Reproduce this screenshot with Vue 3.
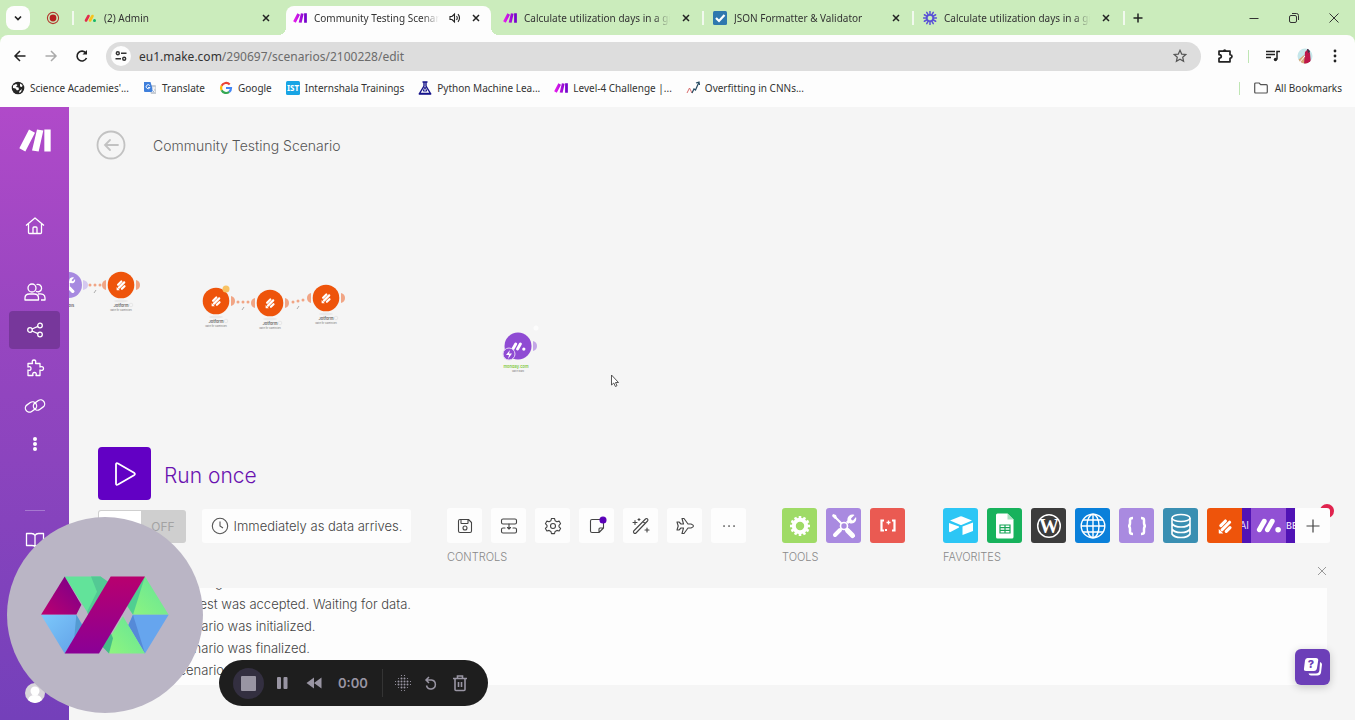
<script setup>
const tabs = [
  { title: '(2) Admin', icon: 'monday', sep: false },
  { title: 'Community Testing Scenario | Make', icon: 'make', active: true, sound: true },
  { title: 'Calculate utilization days in a given month', icon: 'make', sep: true },
  { title: 'JSON Formatter & Validator', icon: 'check', sep: true },
  { title: 'Calculate utilization days in a given month', icon: 'burst', sep: true }
]

const bookmarks = [
  { title: "Science Academies'...", icon: 'globe' },
  { title: 'Translate', icon: 'translate' },
  { title: 'Google', icon: 'google' },
  { title: 'Internshala Trainings', icon: 'ist' },
  { title: 'Python Machine Lea...', icon: 'flask' },
  { title: 'Level-4 Challenge |...', icon: 'make' },
  { title: 'Overfitting in CNNs...', icon: 'chart' }
]

const modules = [
  { x: 52, y: 178, left: true, right: true },
  { x: 147, y: 194, right: true, warn: true },
  { x: 201, y: 196, left: true, right: true },
  { x: 257, y: 191, left: true, right: true }
]

const links = [
  { x: 26, y: 178, tilt: 0 },
  { x: 174, y: 195, tilt: 0 },
  { x: 229, y: 194, tilt: -1 }
]

const controls = ['save', 'align', 'settings', 'note', 'wand', 'plane', 'more']
const controlNames = {
  save: 'Save',
  align: 'Explain flow',
  settings: 'Scenario settings',
  note: 'Notes',
  wand: 'Auto-align',
  plane: 'Flow control',
  more: 'More'
}

const log = [
  'Now running',
  'The request was accepted. Waiting for data.',
  'The scenario was initialized.',
  'The scenario was finalized.',
  'The scenario was stopped.'
]

const burst = Array.from({ length: 12 }, (_, i) => i * 30)
const gearTeeth = Array.from({ length: 12 }, (_, i) => i * 30)
const dots = [
  [3, 0], [6, 0],
  [0, 3], [3, 3], [6, 3], [9, 3],
  [0, 6], [3, 6], [6, 6], [9, 6],
  [3, 9], [6, 9]
]
const faintDots = [
  [-3, 3], [-3, 6], [12, 3], [12, 6],
  [3, -3], [6, -3], [3, 12], [6, 12],
  [0, 0], [9, 0], [0, 9], [9, 9]
]
</script>

<template>
  <div class="screen">
    <svg class="defs" aria-hidden="true">
      <defs>
        <linearGradient id="makeGrad" x1="0" x2="1">
          <stop offset="0" stop-color="#f01ff0" />
          <stop offset="1" stop-color="#6a00c8" />
        </linearGradient>
        <linearGradient id="stripe" x1="0" y1="0" x2="0" y2="1">
          <stop offset="0" stop-color="#b8006e" />
          <stop offset="1" stop-color="#8a0096" />
        </linearGradient>
        <linearGradient id="wedge" x1="1" y1="0" x2="0" y2="1">
          <stop offset="0" stop-color="#76008c" />
          <stop offset="1" stop-color="#bd006f" />
        </linearGradient>
        <linearGradient id="blueL" x1="0" y1="0" x2="1" y2="1">
          <stop offset="0" stop-color="#7cc8fb" />
          <stop offset="1" stop-color="#619fe6" />
        </linearGradient>
        <linearGradient id="greenB" x1="0" y1="1" x2="1" y2="0">
          <stop offset="0" stop-color="#8ff57e" />
          <stop offset="1" stop-color="#62e39a" />
        </linearGradient>
        <symbol id="make" viewBox="0 0 96 68">
          <path d="M30 1 48 11 19 67 1 57zM54 1 73 4 59 67 39 64zM76 1h19v66H76z" />
        </symbol>
        <symbol id="jot" viewBox="0 0 24 24">
          <path d="M7 11.500 12.500 6M8.500 16.500 17.500 7.500M13.500 18.500 18 14" fill="none" stroke="#fff" stroke-width="3.800" stroke-linecap="round" />
          <path d="M4.500 15.500v4.500q0 1 1 1H10z" fill="#fff" />
        </symbol>
        <symbol id="mon" viewBox="0 0 24 14">
          <path d="M3 11 7.500 3M10.500 11 15 3" fill="none" stroke="#fff" stroke-width="4.600" stroke-linecap="round" />
          <circle cx="20.500" cy="11" r="2.600" fill="#fff" />
        </symbol>
        <symbol id="tools" viewBox="0 0 30 30">
          <path d="M5 5 12 12M18 18 25 25" stroke="#fff" stroke-width="2" stroke-linecap="round" />
          <path d="m4 3 3 1 1 3-2 1-3-3z" fill="#fff" />
          <path d="m18.500 19.500 5 5" stroke="#fff" stroke-width="5" stroke-linecap="round" />
          <path d="M11 19 6 24" stroke="#fff" stroke-width="4" stroke-linecap="round" />
          <path d="m18 12 3-3" stroke="#fff" stroke-width="3" />
          <path d="M25.500 4 22 7.500l.5 1.500 1.500.5 3-3.500c1 3-1 6.500-4.500 6.500-3 0-4.500-2.500-4-5 .5-3 4-5 7-3.500z" fill="#fff" />
          <circle cx="15" cy="15" r="3.500" fill="none" stroke="#fff" stroke-width="1.600" />
        </symbol>
      </defs>
    </svg>

    <header class="browser">
      <div class="tabstrip">
        <button class="tab-search" aria-label="Search tabs">
          <svg width="10" height="8" viewBox="0 0 10 8"><path d="m2 2.500 3 3 3-3" fill="none" stroke="#222" stroke-width="1.700" /></svg>
        </button>
        <svg class="rec" width="14" height="14" viewBox="0 0 14 14"><circle cx="7" cy="7" r="5.600" fill="none" stroke="#b3382f" stroke-width="1.100" /><circle cx="7" cy="7" r="3.400" fill="#b51f1f" /></svg>
        <span class="sep first"></span>
        <div v-for="(tab, i) in tabs" :key="i" class="tab" :class="{ active: tab.active, divided: tab.sep }">
          <svg v-if="tab.icon === 'monday'" class="fav" width="14" height="14" viewBox="0 0 14 14" fill="none" stroke-width="2.600" stroke-linecap="round">
            <path d="m3 9.500 2.500-4.500" stroke="#e22b4b" /><path d="m7 9.500 2.500-4.500" stroke="#f7c31d" /><circle cx="11.500" cy="9.500" r="1.500" fill="#14b866" />
          </svg>
          <svg v-else-if="tab.icon === 'make'" class="fav" width="14" height="14" viewBox="0 0 14 14"><use href="#make" y="2" width="14" height="10" fill="url(#makeGrad)" /></svg>
          <svg v-else-if="tab.icon === 'check'" class="fav" width="14" height="14" viewBox="0 0 14 14"><rect width="14" height="14" rx="1.500" fill="#2f78ae" /><path d="m3 7 3 3 5.500-6" fill="none" stroke="#fff" stroke-width="2.200" /></svg>
          <svg v-else class="fav" width="14" height="14" viewBox="-7 -7 14 14"><circle r="3.200" fill="none" stroke="#5a52d6" stroke-width="1.800" /><path v-for="a in burst" :key="a" d="M0-3.500V-6.500" :transform="`rotate(${a})`" stroke="#5a52d6" stroke-width="1.500" stroke-linecap="round" /></svg>
          <span class="tab-title">{{ tab.title }}</span>
          <svg v-if="tab.sound" class="sound" width="12" height="12" viewBox="0 0 12 12" fill="none" stroke="#222" stroke-width="1.100"><path d="M1 4.500h2L5.500 2v8L3 7.500H1zM7.500 4q1.500 2 0 4M9 2.200q3 3.800 0 7.600" /></svg>
          <button class="tab-close" aria-label="Close tab"><svg width="12" height="12" viewBox="0 0 12 12"><path d="m3 3 6 6M9 3 3 9" stroke="#222" stroke-width="1.500" /></svg></button>
        </div>
        <span class="sep last"></span>
        <button class="new-tab" aria-label="New tab"><svg width="12" height="12" viewBox="0 0 12 12"><path d="M6 1.500v9M1.500 6h9" stroke="#222" stroke-width="1.500" /></svg></button>
        <div class="win">
          <button aria-label="Minimize"><svg width="12" height="12" viewBox="0 0 12 12"><path d="M1.500 6.500h9" stroke="#333" /></svg></button>
          <button aria-label="Restore"><svg width="12" height="12" viewBox="0 0 12 12" fill="none" stroke="#333"><rect x="1.500" y="3.500" width="7" height="7" rx="1.500" /><path d="M4 1.500h4.500q2 0 2 2V8" /></svg></button>
          <button aria-label="Close"><svg width="12" height="12" viewBox="0 0 12 12"><path d="m1.500 1.500 9 9M10.500 1.500l-9 9" stroke="#333" /></svg></button>
        </div>
      </div>

      <div class="toolbar">
        <button class="nav" aria-label="Back"><svg width="14" height="14" viewBox="0 0 14 14" fill="none" stroke="#222" stroke-width="1.500"><path d="M12.500 7H2M7 2 2 7l5 5" /></svg></button>
        <button class="nav" aria-label="Forward"><svg width="14" height="14" viewBox="0 0 14 14" fill="none" stroke="#aaa" stroke-width="1.500"><path d="M1.500 7H12M7 2l5 5-5 5" /></svg></button>
        <button class="nav" aria-label="Reload"><svg width="14" height="14" viewBox="0 0 14 14" fill="none" stroke="#222" stroke-width="1.600"><path d="M11.500 9A4.900 4.900 0 1 1 11 4.200" /><path d="M12 1v4.500H7.500z" fill="#222" stroke="none" /></svg></button>
        <div class="omnibox">
          <button class="site-info" aria-label="Site information"><svg width="12" height="12" viewBox="0 0 12 12" fill="none" stroke="#333" stroke-width="1.400"><circle cx="2.800" cy="3.200" r="1.500" /><path d="M6 3.200h5.500M.5 8.800H6" /><circle cx="9.200" cy="8.800" r="1.500" /></svg></button>
          <a class="url" href="#"><b>eu1.make.com</b>/290697/scenarios/2100228/edit</a>
          <button class="star" aria-label="Bookmark"><svg width="14" height="14" viewBox="0 0 14 14"><path d="m7 1.300 1.700 3.800 4.100.4-3.100 2.700.9 4.100L7 10.200l-3.600 2.100.9-4.100L1.200 5.500l4.100-.4z" fill="none" stroke="#555" stroke-width="1.200" /></svg></button>
        </div>
        <button class="ext" aria-label="Extensions"><svg width="16" height="16" viewBox="0 0 16 16"><path d="M2 3.200h11v3.500q2 .3 2 1.800t-2 1.800v3.500H2v-3.500q2.300-.3 2.300-1.800T2 6.700z" fill="none" stroke="#222" stroke-width="1.700" stroke-linejoin="round" /><path d="M6 3q0-1.800 1.700-1.800T9.400 3" fill="#222" /></svg></button>
        <span class="gsep"></span>
        <button class="media" aria-label="Media controls"><svg width="16" height="14" viewBox="0 0 16 14" fill="none" stroke="#222" stroke-width="1.500"><path d="M1 2.500h9M1 5.500h9M1 8.500h5M12 10.500v-8h3" /><circle cx="10.500" cy="10.500" r="1.700" fill="#222" stroke="none" /></svg></button>
        <button class="profile" aria-label="Profile"><svg width="16" height="16" viewBox="0 0 16 16"><clipPath id="pc"><circle cx="8" cy="8" r="7.500" /></clipPath><g clip-path="url(#pc)"><path d="M0 0h16v16H0z" fill="#c5e6ea" /><path d="M0 13 7 7l4 9H0z" fill="#d8a878" /><path d="m8 4 3-3 2 4 1 11H7z" fill="#bd1748" /><path d="m10 1 2-1 1 4-2 1z" fill="#453048" /><path d="m2 15 6-7" stroke="#fff" /></g></svg></button>
        <button class="kebab" aria-label="Menu"><svg width="4" height="14" viewBox="0 0 4 14" fill="#222"><circle cx="2" cy="2" r="1.400" /><circle cx="2" cy="7" r="1.400" /><circle cx="2" cy="12" r="1.400" /></svg></button>
      </div>

      <nav class="bookmarks" aria-label="Bookmarks">
        <a v-for="b in bookmarks" :key="b.title" href="#" class="bm">
          <svg v-if="b.icon === 'globe'" width="14" height="14" viewBox="0 0 14 14"><circle cx="7" cy="7" r="6.300" fill="#262626" /><path d="M2 4.500 5 3l1.500 1L5 6l2.500.5L8 8.500l-2 1-1.500-2L2 7zM9 2.500l2.500 1.500L11 6 9 5.500zM8.500 10l2.500-2-1 3-2 1z" fill="#fff" /></svg>
          <svg v-else-if="b.icon === 'translate'" width="14" height="14" viewBox="0 0 14 14"><path d="M5 4h7q1 0 1 1v8H8z" fill="#c8cdd4" /><path d="M1 1h6.500L10.500 11H2q-1 0-1-1z" fill="#3f7fdb" /><path d="M6.800 4.600A2 2 0 1 0 7 6.500H5M9 7h3.500M11 6v1q0 2-2 4M9.500 8l2.500 3" fill="none" stroke="#fff" stroke-width=".9" /></svg>
          <svg v-else-if="b.icon === 'google'" width="14" height="14" viewBox="0 0 14 14" fill="none" stroke-width="2.200"><path d="M10.700 3.400A5 5 0 0 0 2.600 4.800" stroke="#ea4335" /><path d="M2.600 4.800a5 5 0 0 0 0 4.400" stroke="#fbbc05" /><path d="M2.600 9.200a5 5 0 0 0 7.600 1.700" stroke="#34a853" /><path d="M10.200 10.900A5 5 0 0 0 12 7H7" stroke="#4285f4" /></svg>
          <svg v-else-if="b.icon === 'ist'" width="14" height="14" viewBox="0 0 14 14"><rect width="14" height="14" rx="1.500" fill="#18a4e4" /><text x="7" y="10" text-anchor="middle" font-size="8" font-weight="700" fill="#fff">IST</text></svg>
          <svg v-else-if="b.icon === 'flask'" width="14" height="14" viewBox="0 0 14 14" fill="none" stroke="#16148a" stroke-width="1.400"><path d="M4.500 1h5M6 1v4L1.500 12.500h11L8 5V1" /><path d="m7 6 1.800 4H5.200z" stroke-width="1" /><path d="M1 13h12" /></svg>
          <svg v-else-if="b.icon === 'make'" width="14" height="14" viewBox="0 0 14 14"><use href="#make" y="2" width="14" height="10" fill="url(#makeGrad)" /></svg>
          <svg v-else width="14" height="14" viewBox="0 0 14 14" fill="none"><path d="m1 12 2.500-5L6 12" stroke="#d86c6c" /><path d="M6 12 8 8l1.500 1L13 1M10 2l3-1 .5 3" stroke="#274c63" stroke-width="1.200" /></svg>
          <span>{{ b.title }}</span>
        </a>
        <span class="gsep bm-sep"></span>
        <a href="#" class="bm all">
          <svg width="14" height="12" viewBox="0 0 14 12"><path d="M.7 10V2q0-1 1-1h3.500l1.500 1.700h5.600q1 0 1 1V10q0 1-1 1H1.700q-1 0-1-1z" fill="none" stroke="#555" stroke-width="1.200" /></svg>
          <span>All Bookmarks</span>
        </a>
      </nav>
    </header>

    <div class="app">
      <aside class="sidebar">
        <a class="logo" href="#" aria-label="Make"><svg width="32" height="23" fill="#fff"><use href="#make" width="32" height="23" /></svg></a>
        <a class="item home" href="#" aria-label="Organization"><svg width="20" height="20" viewBox="0 0 20 20"><path d="M1 9.500 10 2l9 7.500M3.500 8v8.500q0 1 1 1h11q1 0 1-1V8M8 17v-5q0-1 1-1h2q1 0 1 1v5" /></svg></a>
        <a class="item" href="#" aria-label="Team"><svg width="22" height="20" viewBox="0 0 22 20"><circle cx="8" cy="6" r="4" /><path d="M12.500 2.700A3.700 3.700 0 1 1 12 9.300M1 18v-2q0-4 4.500-4h4.500q4.500 0 4.500 4v2zM14 12q7-1 7 4v2h-4" /></svg></a>
        <a class="item active" href="#" aria-label="Scenarios"><svg width="20" height="20" viewBox="0 0 20 20"><circle cx="5" cy="10" r="2.300" /><circle cx="15" cy="5.500" r="2.300" /><circle cx="15" cy="14.500" r="2.300" /><path d="m7 9 6-2.600M7 11l6 2.600" /></svg></a>
        <a class="item" href="#" aria-label="Templates"><svg width="20" height="20" viewBox="0 0 20 20"><path d="M3 5.500h4.500Q6.500 2 9 2t1.500 3.500H15V9q3.500-1 3.500 1.500T15 12v5.500h-4q1-3-1.500-3T8 17.500H3V12q3 1 3-1.500T3 9z" /></svg></a>
        <a class="item" href="#" aria-label="Connections"><svg width="22" height="20" viewBox="0 0 22 20"><rect x="1" y="7" width="12" height="8" rx="4" transform="rotate(-35 7 11)" /><rect x="9" y="5" width="12" height="8" rx="4" transform="rotate(-35 15 9)" /></svg></a>
        <a class="item" href="#" aria-label="More"><svg width="6" height="16" viewBox="0 0 6 16"><g class="solid"><circle cx="3" cy="3" r="2" /><circle cx="3" cy="8" r="2" /><circle cx="3" cy="13" r="2" /></g></svg></a>
        <div class="side-bottom">
          <span class="rule"></span>
          <a class="item" href="#" aria-label="Resources"><svg width="20" height="18" viewBox="0 0 20 18"><path d="M10 4.500Q9 2.500 6.500 2.500H1.500v12H7q2 0 3 1 1-1 3-1h5.500v-12h-5Q11 2.500 10 4.500zV15" /></svg></a>
        </div>
        <a class="avatar" href="#" aria-label="Profile"><svg width="20" height="20" viewBox="0 0 20 20"><circle cx="10" cy="10" r="10" fill="#d8d5da" /><circle cx="10" cy="8" r="4.500" fill="#fff" /><path d="M3 17q1-5 7-5t7 5q-3 3-7 3t-7-3z" fill="#fff" /></svg></a>
      </aside>

      <main class="editor">
        <svg class="canvas" width="100%" height="100%">
          <circle cx="0" cy="178" r="13" fill="#a78ae0" />
          <use href="#tools" x="-12" y="168" width="20" height="20" />
          <path d="M14 173q5 1 5 5t-5 5z" fill="#d5c8f0" />
          <text x="0" y="200" class="name">Tools</text>
          <g v-for="(l, i) in links" :key="'l' + i" :transform="`translate(${l.x} ${l.y})`">
            <circle cx="-5" :cy="-l.tilt" r="1.500" class="link" /><circle r="1.500" class="link" /><circle cx="5" :cy="l.tilt" r="1.500" class="link" />
            <path d="m-1 8 2-3" stroke="#999" stroke-width=".8" />
          </g>
          <g v-for="(m, i) in modules" :key="i" :transform="`translate(${m.x} ${m.y})`">
            <path v-if="m.left" d="M-15-5q-4 1-4 5t4 5z" fill="#f1a585" />
            <path v-if="m.right" d="M15-5q4 1 4 5t-4 5z" fill="#f1a585" />
            <circle r="13.300" fill="#ee540b" />
            <use href="#jot" x="-7" y="-7" width="14" height="14" />
            <circle v-if="m.warn" cx="10" cy="-12" r="3.500" fill="#f8c263" />
            <ellipse cy="16" rx="7" ry="1.500" fill="#e9e9e9" />
            <text y="22" class="name">Jotform</text>
            <circle cx="10" cy="20" r="1.800" fill="none" stroke="#ddd" stroke-width=".6" />
            <text y="26" class="sub">Watch for Submissions</text>
          </g>
          <g transform="translate(449 239)">
            <path d="M15-5q4 1 4 5t-4 5z" fill="#c3a6e6" />
            <circle r="13.500" fill="#8f4bd3" />
            <use href="#mon" x="-7" y="-4" width="15" height="9" />
            <circle cx="-9" cy="8" r="6" fill="#8f4bd3" stroke="#e4d5f5" stroke-width="1" />
            <path d="m-8 4-4 5h3l-1 4 4-5.500h-3z" fill="#fff" />
            <circle cx="18" cy="-18" r="2.500" fill="#fcfcfc" />
            <text x="-2" y="22" class="name green">monday.com</text>
            <text x="0" y="26" class="sub">Watch Board</text>
          </g>
        </svg>

        <div class="editor-head">
          <button class="back" aria-label="Back"><svg width="30" height="30" viewBox="0 0 30 30" fill="none" stroke="#c2c2c2" stroke-width="1.800"><circle cx="15" cy="15" r="13.500" /><path d="M22 15H9M14 10l-5 5 5 5" stroke-linecap="round" /></svg></button>
          <h1>Community Testing Scenario</h1>
        </div>

        <div class="dock">
          <div class="run">
            <button class="play" aria-labelledby="run-label"><svg width="26" height="28" viewBox="0 0 26 28"><path d="M4 4.500v19q0 2 2 1L22 15.200q1.800-1.200 0-2.400L6 3.500q-2-1-2 1z" fill="none" stroke="#fff" stroke-width="1.800" /></svg></button>
            <span id="run-label">Run once</span>
          </div>

          <div class="bar">
            <button class="toggle" role="switch" aria-checked="false"><i></i><span>OFF</span></button>
            <button class="schedule"><svg width="18" height="18" viewBox="0 0 18 18" fill="none" stroke="#555" stroke-width="1.100"><circle cx="9" cy="9" r="7.700" /><path d="M9 4.500V9l3 2" /></svg>Immediately as data arrives.</button>

            <section class="group">
              <div class="tiles">
                <button v-for="c in controls" :key="c" class="tile light" :aria-label="controlNames[c]">
                  <svg width="20" height="20" viewBox="0 0 20 20" fill="none" stroke="#444" stroke-width="1.100" stroke-linejoin="round" stroke-linecap="round">
                    <template v-if="c === 'save'"><path d="M3.500 5q0-1.500 1.500-1.500h8.500l3 3V15q0 1.500-1.500 1.500H5q-1.500 0-1.500-1.500zM6 3.500V7q0 .5.500.5h6q.5 0 .5-.5V3.500" /><circle cx="10" cy="12" r="2" /></template>
                    <template v-else-if="c === 'align'"><rect x="2.500" y="3" width="15" height="5" rx="1.500" /><path d="M6 12H4q-1.500 0-1.500 1.500v2Q2.500 17 4 17h12q1.500 0 1.500-1.500v-2Q17.500 12 16 12h-2M10 8v5M8.500 11.500 10 13l1.500-1.500" /></template>
                    <template v-else-if="c === 'settings'"><circle cx="10" cy="10" r="2.500" /><path d="M8.500 2.500h3l.6 2.200 1.800 1 2.200-.6 1.500 2.600L16 9.300v1.500l1.600 1.600-1.500 2.600-2.200-.6-1.800 1-.6 2.200h-3l-.6-2.200-1.800-1-2.200.6-1.500-2.600L4 10.800V9.300L2.400 7.700l1.500-2.600 2.200.6 1.800-1z" /></template>
                    <template v-else-if="c === 'note'"><path d="M12 16.500H5q-1.500 0-1.500-1.500V5q0-1.500 1.500-1.500h10q1.500 0 1.500 1.500v7zM12 16.500V13q0-1 1-1h3.500" /><circle cx="16" cy="4" r="3" fill="#5a00b8" stroke="#5a00b8" /></template>
                    <template v-else-if="c === 'wand'"><path d="M2.700 15 14.500 3q1-1 2 0t0 2L5 17q-1 1-2 0t-.3-2zM12 5.500l2 2M4 4.500v4M2 6.500h4M16 12v4M14 14h4M8 2.500v2M7 3.500h2" /></template>
                    <template v-else-if="c === 'plane'"><path d="M7 2.500h2l4 5.500h3q2.500 1 2.500 2t-2.500 2h-3l-4 5.500H7L8.500 12H6l-2 2H2l1.200-4L2 6h2l2 2h2.500z" /></template>
                    <template v-else><path d="M5 10h.1M10 10h.1M15 10h.1" stroke-width="1.700" /></template>
                  </svg>
                </button>
              </div>
              <h2>CONTROLS</h2>
            </section>

            <section class="group">
              <div class="tiles">
                <button class="tile lime" aria-label="Gear"><svg width="24" height="24" viewBox="-12 -12 24 24"><circle r="6.200" fill="none" stroke="#fff" stroke-width="4" /><path v-for="a in gearTeeth" :key="a" d="M0-7.500v-2.500" :transform="`rotate(${a})`" stroke="#fff" stroke-width="2.600" /></svg></button>
                <button class="tile lilac" aria-label="Tools"><svg width="30" height="30"><use href="#tools" width="30" height="30" /></svg></button>
                <button class="tile red" aria-label="Text parser"><svg width="20" height="16" viewBox="0 0 20 16" fill="none" stroke="#fff" stroke-width="2.200"><path d="M6 2.500H3.500v10H6M14 2.500h2.500v10H14" /><path d="M7 12h2" stroke-width="2" /><path d="M8.500 4.500h4M10.500 2.500v4" stroke-width="1.300" /></svg></button>
              </div>
              <h2>TOOLS</h2>
            </section>

            <section class="group favorites">
              <div class="tiles">
                <button class="tile cyan" aria-label="Airtable"><svg width="26" height="22" viewBox="0 0 26 22" fill="#fff"><path d="M2 5.500 12 1.500q1-.5 2 0l10 4-10 4.200q-1 .4-2 0zM1 8l10 3.500v1L2.500 17Q1 17.500 1 16zM14.500 11.500 25 7.500v8.500L14.500 20z" /></svg></button>
                <button class="tile green" aria-label="Google Sheets"><svg width="20" height="26" viewBox="0 0 20 26"><path d="M2.500.5h10l6 6v17.500q0 1.500-1.500 1.500H2.500Q1 25.500 1 24V2Q1 .5 2.500.5z" fill="#fff" /><path d="M12.500.5v6h6z" fill="#a9e2c0" /><path d="M5 12h10v8H5zM5 14.700h10M5 17.300h10M10 12v8" fill="none" stroke="#18a558" stroke-width="1.200" /></svg></button>
                <button class="tile dark" aria-label="WordPress"><svg width="26" height="26" viewBox="0 0 26 26"><circle cx="13" cy="13" r="11.300" fill="none" stroke="#fff" stroke-width="1.500" /><text x="13" y="20" text-anchor="middle" class="wp">W</text></svg></button>
                <button class="tile blue" aria-label="HTTP"><svg width="26" height="26" viewBox="0 0 26 26" fill="none" stroke="#fff" stroke-width="1.400"><circle cx="13" cy="13" r="11.800" /><ellipse cx="13" cy="13" rx="6" ry="11.800" /><path d="M13 1v24M1 13h24M3 7h20M3 19h20" /></svg></button>
                <button class="tile lilac" aria-label="JSON"><svg width="22" height="20" viewBox="0 0 22 20" fill="none" stroke="#fff" stroke-width="2.500"><path d="M7 2q-3 0-3 2v3q0 3-2 3 2 0 2 3v3q0 2 3 2M15 2q3 0 3 2v3q0 3 2 3-2 0-2 3v3q0 2-3 2" /></svg></button>
                <button class="tile teal" aria-label="Data store"><svg width="22" height="26" viewBox="0 0 22 26" fill="none" stroke="#fff" stroke-width="1.600"><ellipse cx="11" cy="5" rx="9" ry="3.500" /><path d="M2 5v16q2 3.500 9 3.500t9-3.500V5M2 10.500q2 3.500 9 3.500t9-3.500M2 16q2 3.500 9 3.500t9-3.500" /></svg></button>
                <div class="stack">
                  <button class="tile orange" aria-label="Jotform"><svg width="20" height="20"><use href="#jot" width="20" height="20" /></svg></button>
                  <span class="sliver ai">AI</span>
                  <button class="tile violet" aria-label="monday.com"><svg width="26" height="15"><use href="#mon" width="26" height="15" /></svg></button>
                  <span class="sliver beta">BE</span>
                  <button class="tile plus" aria-label="Add module"><svg width="14" height="14" viewBox="0 0 14 14"><path d="M7 .5v13M.5 7h13" stroke="#444" stroke-width="1.200" /></svg></button>
                </div>
              </div>
              <h2>FAVORITES</h2>
            </section>
          </div>

          <button class="close-log" aria-label="Close log"><svg width="10" height="10" viewBox="0 0 10 10"><path d="m1 1 8 8M9 1 1 9" stroke="#999" /></svg></button>

          <div class="log">
            <p v-for="line in log" :key="line">{{ line }}</p>
          </div>
        </div>
      </main>
    </div>

    <button class="help" aria-label="Help"><svg width="22" height="22" viewBox="0 0 22 22"><path d="M18 6q2 .5 2 2.500l-1 8q-.5 3-3.500 3H9q-2 0-2.500-2H14q3 0 3.400-3z" fill="#fff" /><path d="M5.500 2H14q2.500 0 2.200 2.500L15 12q-.5 3-3 3H4q-2.500 0-2-2.500L3 4.500Q3.300 2 5.500 2z" fill="#fff" /><text x="9" y="12" text-anchor="middle" class="q">?</text></svg></button>

    <div class="camera">
      <svg width="128" height="78" viewBox="0 0 384 231">
        <path d="M71 0h108l16 40-57 66z" fill="#62e39a" />
        <path d="m138 106 30-60-18-46h29l29 20-60 110z" fill="#53c994" />
        <path d="M71 0 121 85 106 115H0z" fill="url(#wedge)" />
        <path d="M0 115h106l20 34-55 82z" fill="url(#blueL)" />
        <path d="m106 115 20 34-26 32z" fill="#549bd2" />
        <path d="M312 0 383 115H276L258 88z" fill="url(#greenB)" />
        <path d="m312 0-36 115-18-27z" fill="#50cf91" />
        <path d="M276 115h107l-71 116-50-85z" fill="#66a5ee" />
        <path d="m276 115 36 116-50-85z" fill="#558ad8" />
        <path d="m246 119 66 112H204l4-50z" fill="url(#greenB)" />
        <path d="m208 165 8 20-12 46-20-20z" fill="#46bd88" />
        <path d="M209 0h103L174 231H71z" fill="url(#stripe)" />
      </svg>
    </div>

    <div class="recorder">
      <button class="stop" aria-label="Stop"><i></i></button>
      <button aria-label="Pause"><svg width="12" height="14" viewBox="0 0 12 14" fill="#9995a3"><rect x="1" y="1" width="4" height="12" rx="1" /><rect x="7.500" y="1" width="4" height="12" rx="1" /></svg></button>
      <button class="rewind" aria-label="Rewind"><svg width="16" height="12" viewBox="0 0 16 12" fill="#9995a3"><path d="M8 .5v11L.5 6zM15.500.5v11L8 6z" /></svg></button>
      <time>0:00</time>
      <span class="rec-sep"></span>
      <button class="blur" aria-label="Blur"><svg width="16" height="16" viewBox="-3.500 -3.500 16 16" fill="#9995a3"><circle v-for="(d, i) in dots" :key="i" :cx="d[0]" :cy="d[1]" r="1" /><circle v-for="(d, i) in faintDots" :key="'o' + i" :cx="d[0]" :cy="d[1]" r=".6" /></svg></button>
      <button class="undo" aria-label="Restart"><svg width="14" height="14" viewBox="0 0 14 14" fill="none" stroke="#9995a3" stroke-width="1.500"><path d="M2 4h5.500a4.500 4.500 0 1 1-5 5.500M5 1 2 4l3 3" /></svg></button>
      <button aria-label="Delete"><svg width="16" height="18" viewBox="0 0 16 18" fill="none" stroke="#9995a3" stroke-width="1.600"><path d="M1 4.500h14M5.500 4V2h5v2M3 5v10.500q0 1 1 1h8q1 0 1-1V5M6.500 8v5M9.500 8v5" /></svg></button>
    </div>

    <svg class="cursor" width="10" height="14" viewBox="0 0 10 14"><path d="M1.500 1v10l2.300-2 1.600 3.500 1.600-.8L5.500 8.500h3z" fill="#fff" stroke="#444" stroke-width=".9" /></svg>
  </div>
</template>

<style>
body {
  margin: 0;
  overflow: hidden;
}
</style>

<style scoped>
* {
  box-sizing: border-box;
}
button {
  border: 0;
  padding: 0;
  background: none;
  font: inherit;
  color: inherit;
  display: flex;
  align-items: center;
  justify-content: center;
  flex: none;
}
a {
  color: inherit;
  text-decoration: none;
}
svg {
  display: block;
  flex: none;
}
.defs {
  position: absolute;
  width: 0;
  height: 0;
}
.screen {
  position: relative;
  display: flex;
  flex-direction: column;
  height: 100vh;
  overflow: hidden;
  background: #f5f5f5;
  font-family: Inter, "Liberation Sans", sans-serif;
}
.browser {
  background: #cbecbc;
  font-family: "Noto Sans", "Open Sans", sans-serif;
  font-size: 10px;
  color: #333;
}
.tabstrip {
  display: flex;
  align-items: center;
  height: 35px;
  padding: 0 15px 0 6px;
}
.tab-search {
  width: 24px;
  height: 24px;
  border-radius: 8px;
  background: #fdfdfd;
}
.rec {
  margin-left: 16px;
}
.sep {
  width: 2px;
  height: 14px;
  background: #f1f9ee;
  flex: none;
}
.sep.first {
  margin-left: 12px;
  margin-right: 2px;
}
.tab {
  position: relative;
  display: flex;
  align-items: center;
  flex: 0 1 210px;
  min-width: 0;
  height: 35px;
  padding: 0 14px 0 7px;
}
.tab.divided + .tab.divided::before {
  content: "";
  position: absolute;
  left: -4px;
  top: 11px;
  width: 2px;
  height: 14px;
  background: #f1f9ee;
}
.tab.active::before {
  content: "";
  position: absolute;
  inset: 6px 5px 0 0;
  border-radius: 8px 8px 0 0;
  background: #fdfdfd;
}
.tab.active::after {
  content: "";
  position: absolute;
  left: -8px;
  right: -3px;
  bottom: 0;
  height: 8px;
  background:
    radial-gradient(circle at 0 0, transparent 8px, #fdfdfd 8px) left / 8px 8px no-repeat,
    radial-gradient(circle at 100% 0, transparent 8px, #fdfdfd 8px) right / 8px 8px no-repeat;
}
.tab > * {
  position: relative;
  z-index: 1;
}
.tab-title {
  flex: 1;
  min-width: 0;
  margin: 0 10px 0 7px;
  overflow: hidden;
  white-space: nowrap;
  mask-image: linear-gradient(to left, transparent, #000 16px);
}
.sound {
  margin-right: 9px;
}
.sep.last {
  margin-left: -3px;
  margin-right: 7px;
}
.win {
  display: flex;
  gap: 28px;
  margin-left: auto;
}
.toolbar {
  display: flex;
  align-items: center;
  height: 42px;
  padding: 0 18px 0 13px;
  border-radius: 8px 8px 0 0;
  background: #fdfdfd;
}
.nav {
  margin-right: 17px;
}
.omnibox {
  display: flex;
  align-items: center;
  flex: 1;
  min-width: 0;
  height: 29px;
  padding: 0 14px 0 5px;
  border-radius: 15px;
  background: #dddddd;
}
.site-info {
  width: 20px;
  height: 20px;
  border-radius: 50%;
  background: #fdfdfd;
}
.url {
  flex: 1;
  margin-left: 8px;
  font-size: 12px;
  color: #6b6b6b;
}
.url b {
  font-weight: 400;
  color: #333;
}
.ext {
  margin-left: 16px;
}
.gsep {
  width: 1px;
  height: 13px;
  background: #bfe6b4;
  margin: 0 16px 0 15px;
}
.profile {
  margin: 0 20px 0 16px;
}
.bookmarks {
  display: flex;
  align-items: center;
  gap: 14px;
  height: 30px;
  padding: 0 13px 8px 11px;
  background: #fdfdfd;
}
.bm {
  display: flex;
  align-items: center;
  gap: 5px;
  white-space: nowrap;
}
.bm-sep {
  margin: 0 0 0 auto;
}
.bm.all {
  gap: 7px;
}
.app {
  display: flex;
  flex: 1;
  min-height: 0;
}
.sidebar {
  display: flex;
  flex-direction: column;
  align-items: center;
  width: 69px;
  padding: 22px 0 17px;
  background: linear-gradient(#b04ac9, #9746c0 36%, #7440ba);
  flex: none;
  z-index: 1;
}
.logo {
  margin-bottom: 55px;
}
.item {
  display: flex;
  align-items: center;
  justify-content: center;
  width: 51px;
  height: 38px;
  border-radius: 4px;
}
.item svg {
  fill: none;
  stroke: #fff;
  stroke-width: 1.3;
  stroke-linejoin: round;
}
.item .solid {
  fill: #fff;
  stroke: none;
}
.item.home {
  margin-bottom: 28px;
}
.item.active {
  background: #77379b;
}
.side-bottom {
  display: flex;
  flex-direction: column;
  align-items: center;
  gap: 10px;
  margin-top: 47px;
}
.rule {
  width: 20px;
  height: 1px;
  background: #a678d0;
}
.avatar {
  margin-top: auto;
}
.editor {
  position: relative;
  display: flex;
  flex-direction: column;
  justify-content: space-between;
  flex: 1;
  min-width: 0;
}
.canvas {
  position: absolute;
  inset: 0;
}
.name {
  font-size: 4px;
  font-weight: 600;
  fill: #666;
  text-anchor: middle;
}
.name.green {
  fill: #7fc93c;
}
.sub {
  font-size: 2px;
  fill: #777;
  text-anchor: middle;
}
.link {
  fill: #f1a585;
}
.editor-head {
  position: relative;
  display: flex;
  align-items: center;
  gap: 27px;
  padding: 23px 27px 0;
}
h1 {
  margin: 0;
  font-size: 14px;
  font-weight: 300;
  color: #555;
}
.dock {
  position: relative;
  padding: 0 25px 35px 29px;
}
.run {
  display: flex;
  align-items: center;
  gap: 13px;
  font-size: 21px;
  font-weight: 300;
  color: #6a12b0;
}
.run span {
  padding-top: 3px;
}
.play {
  width: 53px;
  height: 53px;
  border-radius: 4px;
  background: #6200c4;
}
.bar {
  display: flex;
  align-items: flex-start;
  margin-top: 8px;
}
.toggle {
  width: 88px;
  height: 33px;
  margin-top: 2px;
  padding: 1px;
  border-radius: 3px;
  background: #cfcfcf;
  color: #a3a3a3;
  font-size: 12px;
  align-items: stretch;
}
.toggle i {
  width: 42px;
  background: #fff;
  border-radius: 2px 0 0 2px;
}
.toggle span {
  flex: 1;
  align-self: center;
}
.schedule {
  gap: 5px;
  width: 209px;
  height: 34px;
  margin: 1px 0 0 16px;
  border-radius: 3px;
  background: #fdfdfd;
  color: #444;
  font-size: 13px;
  font-weight: 300;
  white-space: nowrap;
}
.group {
  margin-left: 36px;
}
.favorites {
  margin-left: auto;
}
.tiles {
  display: flex;
  gap: 9px;
}
.tile {
  width: 35px;
  height: 35px;
  border-radius: 3px;
}
h2 {
  margin: 7px 0 0;
  font-size: 11px;
  line-height: 14px;
  font-weight: 300;
  color: #888;
}
.light, .plus { background: #fdfdfd; }
.lime { background: #9fdb66; }
.lilac { background: #a98ae0; }
.red { background: #ea5a52; }
.cyan { background: #2cc6f5; }
.green { background: #17b25c; }
.dark { background: #3c3c3c; }
.blue { background: #0a80da; }
.teal { background: #3a8fb2; }
.orange { background: #ee540b; border-radius: 3px 0 0 3px; }
.violet { background: #9150d4; border-radius: 0; }
.stack {
  position: relative;
  display: flex;
}
.stack::after {
  content: "";
  position: absolute;
  right: -4px;
  top: -4px;
  width: 14px;
  height: 14px;
  border-radius: 50%;
  background: #e0234e;
}
.stack .plus {
  position: relative;
  z-index: 1;
}
.sliver {
  width: 9px;
  overflow: hidden;
  background: #5013b5;
  color: #e6dcf7;
  font-size: 10px;
  line-height: 35px;
  display: flex;
  justify-content: flex-end;
}
.ai {
  padding-right: 2px;
}
.beta {
  justify-content: flex-start;
  font-size: 9px;
  font-weight: 600;
}
.wp {
  font-family: "Liberation Serif", serif;
  font-size: 20px;
  font-weight: 700;
  fill: #fff;
}
.close-log {
  margin: 2px 3px 0 auto;
}
.log {
  display: flex;
  flex-direction: column;
  justify-content: flex-end;
  height: 97px;
  margin: 12px 3px 0 0;
  padding: 0 0 4px 47px;
  overflow: hidden;
  background: #fdfdfd;
  color: #444;
  font-size: 13px;
  font-weight: 300;
}
.log p {
  margin: 0;
  line-height: 22px;
  flex: none;
}
.help {
  position: absolute;
  right: 25px;
  bottom: 35px;
  width: 35px;
  height: 36px;
  border-radius: 6px;
  background: #6c3fb8;
  box-shadow: 0 2px 8px #0003;
}
.q {
  font-size: 11px;
  font-weight: 800;
  fill: #6c3fb8;
}
.camera {
  position: absolute;
  left: 7px;
  bottom: 7px;
  z-index: 2;
  display: flex;
  align-items: center;
  justify-content: center;
  width: 196px;
  height: 196px;
  border-radius: 50%;
  background: #bab5c5;
}
.recorder {
  position: absolute;
  left: 219px;
  bottom: 14px;
  z-index: 2;
  display: flex;
  align-items: center;
  height: 46px;
  padding: 0 20px 0 14px;
  border-radius: 23px;
  background: #1e1e1e;
  color: #9995a3;
  font-size: 13px;
  font-weight: 600;
}
.stop {
  width: 31px;
  height: 31px;
  margin-right: 12px;
  border-radius: 50%;
  background: #332f40;
}
.stop i {
  width: 15px;
  height: 15px;
  border-radius: 1px;
  background: #9995a3;
}
.rewind {
  margin: 0 16px 0 18px;
}
.rec-sep {
  width: 1px;
  height: 28px;
  margin: 0 12px 0 14px;
  background: #343434;
}
.undo {
  margin: 0 14px 0 13px;
}
.cursor {
  position: absolute;
  left: 610px;
  top: 374px;
  z-index: 2;
}
</style>
